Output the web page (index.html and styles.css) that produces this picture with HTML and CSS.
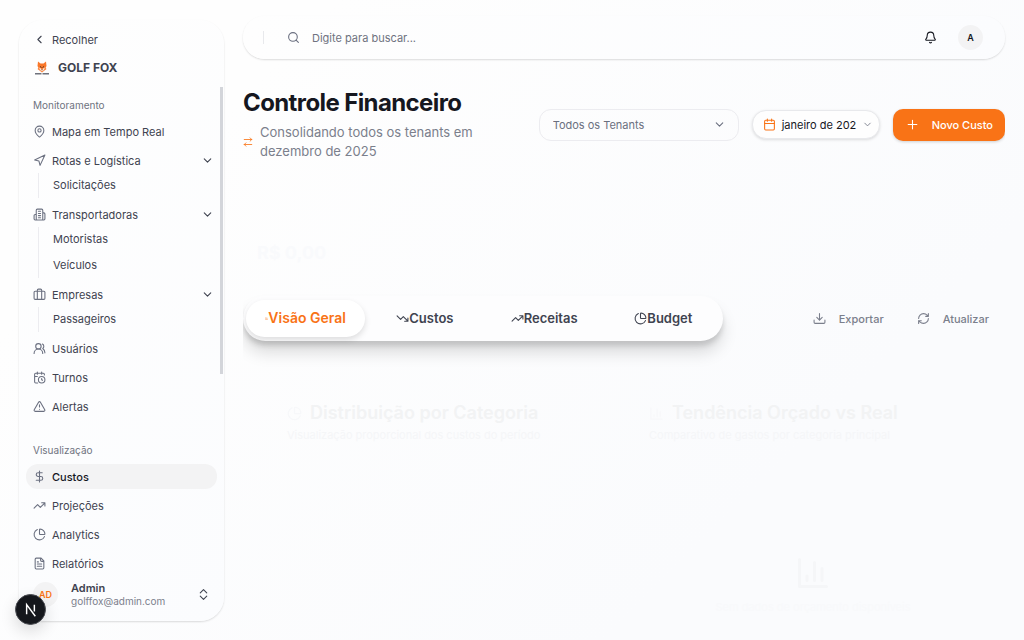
FILE: index.html
```html
<!DOCTYPE html>
<html lang="pt-BR">
<head>
<meta charset="utf-8">
<title>Controle Financeiro</title>
<link rel="stylesheet" href="styles.css">
</head>
<body>
<svg class="sprite" aria-hidden="true">
  <symbol id="left" viewBox="0 0 24 24"><path d="m15 18-6-6 6-6"/></symbol>
  <symbol id="down" viewBox="0 0 24 24"><path d="m6 9 6 6 6-6"/></symbol>
  <symbol id="pin" viewBox="0 0 24 24"><path d="M20 10c0 5-5.500 10.200-7.400 11.800a1 1 0 0 1-1.200 0C9.500 20.200 4 15 4 10a8 8 0 0 1 16 0"/><circle cx="12" cy="10" r="3"/></symbol>
  <symbol id="nav" viewBox="0 0 24 24"><path d="M3 11 22 2l-9 19-2-8z"/></symbol>
  <symbol id="building" viewBox="0 0 24 24"><path d="M6 22V4a2 2 0 0 1 2-2h8a2 2 0 0 1 2 2v18zM6 12H4a2 2 0 0 0-2 2v6a2 2 0 0 0 2 2h2M18 9h2a2 2 0 0 1 2 2v9a2 2 0 0 1-2 2h-2M10 6h4M10 10h4M10 14h4M10 18h4"/></symbol>
  <symbol id="case" viewBox="0 0 24 24"><path d="M8 20V4a2 2 0 0 1 2-2h4a2 2 0 0 1 2 2v16"/><rect x="2" y="6" width="20" height="15" rx="2"/></symbol>
  <symbol id="users" viewBox="0 0 24 24"><path d="M18 21a8 8 0 0 0-16 0"/><circle cx="10" cy="8" r="5"/><path d="M22 20c0-3.400-2-6.500-4-8a5 5 0 0 0-.5-8.300"/></symbol>
  <symbol id="calclock" viewBox="0 0 24 24"><path d="M16 14v2.200l1.600 1M16 2v4M21 7.500V6a2 2 0 0 0-2-2H5a2 2 0 0 0-2 2v14a2 2 0 0 0 2 2h3.500M3 10h5M8 2v4"/><circle cx="16" cy="16" r="6"/></symbol>
  <symbol id="alert" viewBox="0 0 24 24"><path d="m21.700 18-8-14a2 2 0 0 0-3.400 0l-8 14A2 2 0 0 0 4 21h16a2 2 0 0 0 1.700-3M12 9v4M12 17h.01"/></symbol>
  <symbol id="dollar" viewBox="0 0 24 24"><path d="M12 2v20M17 5H9.500a3.500 3.500 0 0 0 0 7h5a3.500 3.500 0 0 1 0 7H6"/></symbol>
  <symbol id="up" viewBox="0 0 24 24"><path d="M16 7h6v6M22 7l-8.500 8.500-5-5L2 17"/></symbol>
  <symbol id="fall" viewBox="0 0 24 24"><path d="M16 17h6v-6M22 17l-8.500-8.500-5 5L2 7"/></symbol>
  <symbol id="pie" viewBox="0 0 24 24"><path d="M21 12c.6 0 1-.4 1-1a9 9 0 0 0-9-9c-.6 0-1 .4-1 1v8a1 1 0 0 0 1 1zM21.200 15.900A10 10 0 1 1 8 2.800"/></symbol>
  <symbol id="file" viewBox="0 0 24 24"><path d="M15 2H6a2 2 0 0 0-2 2v16a2 2 0 0 0 2 2h12a2 2 0 0 0 2-2V7zM14 2v4a2 2 0 0 0 2 2h4M10 9H8M16 13H8M16 17H8"/></symbol>
  <symbol id="updown" viewBox="0 0 24 24"><path d="m6 15 6 6 6-6M6 9l6-6 6 6"/></symbol>
  <symbol id="search" viewBox="0 0 24 24"><circle cx="11" cy="11" r="8"/><path d="m21 21-4.300-4.300"/></symbol>
  <symbol id="bell" viewBox="0 0 24 24"><path d="M10.300 21a2 2 0 0 0 3.400 0M3.300 15.300A1 1 0 0 0 4 17h16a1 1 0 0 0 .7-1.700C19.400 14 18 12.500 18 8A6 6 0 0 0 6 8c0 4.500-1.400 6-2.700 7.300"/></symbol>
  <symbol id="swap" viewBox="0 0 24 24"><path d="m17 2 4 4-4 4M3 6h18M7 22l-4-4 4-4M21 18H3"/></symbol>
  <symbol id="cal" viewBox="0 0 24 24"><path d="M8 2v4M16 2v4M3 10h18"/><rect x="3" y="4" width="18" height="18" rx="2"/></symbol>
  <symbol id="plus" viewBox="0 0 24 24"><path d="M4 12h16M12 4v16"/></symbol>
  <symbol id="export" viewBox="0 0 24 24"><path d="M12 3v12M7 10l5 5 5-5M2 15v4a2 2 0 0 0 2 2h16a2 2 0 0 0 2-2v-4"/></symbol>
  <symbol id="refresh" viewBox="0 0 24 24"><path d="M3 12a9 9 0 0 1 9-9 9.800 9.800 0 0 1 6.700 2.700L21 8M21 3v5h-5M21 12a9 9 0 0 1-9 9 9.800 9.800 0 0 1-6.700-2.700L3 16M8 16H3v5"/></symbol>
  <symbol id="bars" viewBox="0 0 24 24"><path d="M3 3v18h18M18 17V9M13 17V5M8 17v-3"/></symbol>
</svg>
<div class="app">
  <aside class="sidebar">
    <button class="row collapse"><svg class="icon"><use href="#left"/></svg><span>Recolher</span></button>
    <div class="brand">
      <svg class="fox" viewBox="0 0 28 28" aria-hidden="true"><path class="fur" d="M6 1l5 4h6l5-4 1 9-2 4 2 2-4 3-5 4-5-4-4-3 2-2-2-4z"/><path class="muzzle" d="M8 13l4 2 2 4 2-4 4-2-2 5-4 3-4-3z"/><path class="ink" d="M12 17h4l-2 2zM0 24h13v3H0zM15 24h13v3H15z"/><path class="eye" d="M10 11l3 2M18 11l-3 2"/></svg>
      <strong>GOLF FOX</strong>
    </div>
    <nav class="menu">
      <h2>Monitoramento</h2>
      <a class="row" href="#"><svg class="icon"><use href="#pin"/></svg><span>Mapa em Tempo Real</span></a>
      <a class="row" href="#"><svg class="icon"><use href="#nav"/></svg><span>Rotas e Logística</span><svg class="icon chev"><use href="#down"/></svg></a>
      <div class="sub"><a href="#">Solicitações</a></div>
      <a class="row" href="#"><svg class="icon"><use href="#building"/></svg><span>Transportadoras</span><svg class="icon chev"><use href="#down"/></svg></a>
      <div class="sub"><a href="#">Motoristas</a><a href="#">Veículos</a></div>
      <a class="row" href="#"><svg class="icon"><use href="#case"/></svg><span>Empresas</span><svg class="icon chev"><use href="#down"/></svg></a>
      <div class="sub"><a href="#">Passageiros</a></div>
      <a class="row" href="#"><svg class="icon"><use href="#users"/></svg><span>Usuários</span></a>
      <a class="row" href="#"><svg class="icon"><use href="#calclock"/></svg><span>Turnos</span></a>
      <a class="row" href="#"><svg class="icon"><use href="#alert"/></svg><span>Alertas</span></a>
      <h2 class="second">Visualização</h2>
      <a class="row active" href="#"><svg class="icon"><use href="#dollar"/></svg><span>Custos</span></a>
      <a class="row" href="#"><svg class="icon"><use href="#up"/></svg><span>Projeções</span></a>
      <a class="row" href="#"><svg class="icon"><use href="#pie"/></svg><span>Analytics</span></a>
      <a class="row" href="#"><svg class="icon"><use href="#file"/></svg><span>Relatórios</span></a>
    </nav>
    <button class="account">
      <span class="avatar orange">AD</span>
      <span class="who"><strong>Admin</strong><small>golffox@admin.com</small></span>
      <svg class="icon"><use href="#updown"/></svg>
    </button>
    <div class="scrollbar"></div>
  </aside>
  <div class="content">
    <header class="topbar">
      <span class="divider"></span>
      <label class="search"><svg class="icon"><use href="#search"/></svg><input type="text" placeholder="Digite para buscar..." aria-label="Buscar"></label>
      <button class="plain" aria-label="Notificações"><svg class="icon"><use href="#bell"/></svg></button>
      <button class="avatar">A</button>
    </header>
    <main>
      <section class="heading">
        <div class="intro">
          <h1>Controle Financeiro</h1>
          <p><svg class="icon"><use href="#swap"/></svg><span>Consolidando todos os tenants em dezembro de 2025</span></p>
        </div>
        <div class="actions">
          <div class="tenant">
            <select aria-label="Tenant"><option>Todos os Tenants</option></select>
            <svg class="icon"><use href="#down"/></svg>
          </div>
          <button class="month"><svg class="icon cal"><use href="#cal"/></svg><span>janeiro de 202</span><svg class="icon"><use href="#down"/></svg></button>
          <button class="primary"><svg class="icon"><use href="#plus"/></svg>Novo Custo</button>
        </div>
      </section>
      <section class="summary"><span>R$ 0,00</span></section>
      <section class="toolbar">
        <div class="tabs" role="tablist">
          <button role="tab" aria-selected="true" class="tab selected"><svg class="icon"><use href="#bars"/></svg>Visão Geral</button>
          <button role="tab" class="tab"><svg class="icon"><use href="#fall"/></svg>Custos</button>
          <button role="tab" class="tab"><svg class="icon"><use href="#up"/></svg>Receitas</button>
          <button role="tab" class="tab"><svg class="icon"><use href="#pie"/></svg>Budget</button>
        </div>
        <div class="tools">
          <button class="plain"><svg class="icon"><use href="#export"/></svg>Exportar</button>
          <button class="plain"><svg class="icon"><use href="#refresh"/></svg>Atualizar</button>
        </div>
      </section>
      <section class="charts">
        <article>
          <h3><svg class="icon"><use href="#pie"/></svg>Distribuição por Categoria</h3>
          <p>Visualização proporcional dos custos do período</p>
        </article>
        <article>
          <h3><svg class="icon"><use href="#bars"/></svg>Tendência Orçado vs Real</h3>
          <p>Comparativo de gastos por categoria principal</p>
          <div class="empty"><svg class="icon"><use href="#bars"/></svg><span>Sem dados de orçamento disponíveis</span></div>
        </article>
      </section>
    </main>
  </div>
</div>
<button class="dev" aria-label="Ferramentas"><svg viewBox="0 0 30 30" aria-hidden="true"><path d="M11 20V10L20 22M19 10v7"/></svg></button>
</body>
</html>
```
FILE: styles.css
```css
* { box-sizing: border-box; }
body {
  margin: 0;
  min-height: 100vh;
  overflow: hidden;
  font: 11px/16px Inter, sans-serif;
  color: #3f4350;
  background: linear-gradient(135deg, #fefefe 20%, #fafbfd 75%);
}
button, input, select { font: inherit; color: inherit; border: 0; background: none; padding: 0; margin: 0; }
a { color: inherit; text-decoration: none; }
h1, h2, h3, p { margin: 0; }
.sprite { display: none; }
.icon {
  width: 13px; height: 13px; flex: none;
  fill: none; stroke: currentColor; stroke-width: 2;
  stroke-linecap: round; stroke-linejoin: round;
}
.app { display: flex; height: 100vh; }

.sidebar {
  position: relative;
  flex: none;
  display: flex; flex-direction: column;
  width: 205px;
  margin: 20px 0 19px 19px;
  padding: 7px;
  border-radius: 24px;
  background: linear-gradient(135deg, #fefefe, #fbfcfe);
  box-shadow: 0 1px 2px rgba(0, 0, 0, .14);
}
.row { flex: none; display: flex; align-items: center; gap: 6px; height: 25px; padding: 0 7px; border-radius: 12px; }
.row > .icon:first-child { color: #6b7080; }
.row span { flex: 1; text-align: left; }
.collapse > .icon:first-child { color: #3f4350; }
.row .chev { color: #3f4350; margin-right: -4px; }
.brand { display: flex; align-items: center; gap: 9px; height: 32px; padding: 0 9px; font-size: 12px; }
.brand strong { font-weight: 700; }
.fox { width: 14px; height: 14px; }
.fur { fill: #f9772a; }
.muzzle { fill: #fbe3d2; }
.ink { fill: #3f4350; opacity: .75; }
.eye { fill: none; stroke: #5b3420; stroke-width: 2; }
.menu { flex: 1; min-height: 0; display: flex; flex-direction: column; gap: 4px; padding-top: 11px; }
.menu h2 { font-size: 10px; line-height: 20px; font-weight: 400; color: #6f7380; padding: 0 7px; }
.menu .second { margin-top: 17px; }
.active { background: #f3f3f4; color: #15171f; font-weight: 500; }
.sub { display: flex; flex-direction: column; gap: 1px; margin: -4px 0 0 12px; padding-left: 14px; border-left: 1px solid #ececf0; }
.sub a { line-height: 25px; }
.scrollbar { position: absolute; right: 1px; top: 67px; width: 3px; height: 287px; background: #d3d5da; }
.account { flex: none; display: flex; align-items: center; gap: 13px; height: 39px; padding: 0 7px; text-align: left; }
.who { flex: 1; }
.who strong, .who small { display: block; line-height: 13px; }
.who strong { font-weight: 600; }
.who small { font-size: 10px; color: #7b7f8c; }
.avatar { display: grid; place-items: center; width: 25px; height: 25px; border-radius: 50%; background: #f3f3f4; color: #15171f; font-size: 9px; font-weight: 600; }
.avatar.orange { color: #f97316; }

.content { flex: 1; min-width: 0; display: flex; flex-direction: column; padding: 16px 19px 0; }
.topbar {
  display: flex; align-items: center;
  height: 43px; padding: 0 22px 0 20px;
  border-radius: 22px;
  background: linear-gradient(90deg, #fefefe, #fbfcfe);
  box-shadow: 0 1px 2px rgba(0, 0, 0, .14);
}
.divider { width: 1px; height: 13px; background: #e8e9ec; }
.search { flex: 1; display: flex; align-items: center; gap: 12px; padding-left: 23px; color: #6b7080; }
.search input { flex: 1; outline: 0; }
.search input::placeholder { color: #6f7380; opacity: 1; }
.plain { display: flex; align-items: center; gap: 13px; }
.topbar .plain { color: #15171f; margin-right: 21px; }

main { flex: 1; min-height: 0; overflow: hidden; padding-top: 29px; }
.heading { display: flex; justify-content: space-between; align-items: center; }
.intro { width: 256px; }
h1 { font-size: 24px; line-height: 30px; font-weight: 700; letter-spacing: -0.025em; color: #15171f; }
.intro p { display: flex; align-items: center; gap: 7px; margin-top: 5px; font-size: 13px; line-height: 19px; color: #7b7f8c; }
.intro p .icon { width: 10px; height: 10px; color: #f97316; }
.actions { display: flex; align-items: center; gap: 13px; }
.tenant { display: flex; align-items: center; width: 200px; height: 32px; padding: 0 12px 0 13px; border: 1px solid #ececf0; border-radius: 12px; color: #6b7080; }
.tenant select { flex: 1; appearance: none; outline: 0; }
.month { display: flex; align-items: center; gap: 6px; width: 128px; height: 29px; padding: 0 10px; border: 1px solid #e8e9ec; border-radius: 14px; background: #fefefe; color: #15171f; box-shadow: 0 1px 3px rgba(0, 0, 0, .13); }
.month span { flex: 1; white-space: nowrap; text-align: left; }
.month .cal { color: #f97316; }
.month .icon:last-child { width: 11px; height: 11px; color: #7b7f8c; }
.primary { display: flex; align-items: center; gap: 13px; height: 32px; padding: 0 12px 0 13px; border-radius: 10px; background: #f97316; color: #fff; font-weight: 500; box-shadow: 0 1px 3px rgba(0, 0, 0, .18); }
.summary { height: 135px; padding: 80px 14px 0; font-size: 18px; line-height: 24px; font-weight: 700; color: #f9fafc; }

.toolbar { display: flex; align-items: center; justify-content: space-between; }
.tabs { display: grid; grid-template-columns: repeat(4, 1fr); flex: 0 1 480px; height: 45px; padding: 4px 0 4px 3px; border-radius: 23px; background: #fdfdfe; box-shadow: 0 12px 16px rgba(0, 0, 0, .13), 0 5px 5px rgba(0, 0, 0, .12); }
.tab { display: flex; align-items: center; justify-content: center; border-radius: 19px; font-size: 13px; line-height: 16px; font-weight: 600; padding-bottom: 1px; }
.selected { font-size: 14px; color: #f97316; background: #fff; box-shadow: 0 3px 6px rgba(0, 0, 0, .13); }
.selected .icon { width: 3px; height: 3px; }
.tools { display: flex; gap: 33px; padding-right: 16px; color: #7b7f8c; font-weight: 500; }
.charts { display: grid; grid-template-columns: 1fr 1fr; gap: 34px; padding: 60px 28px 0 44px; }
.charts h3 { display: flex; align-items: center; gap: 8px; font-size: 18px; line-height: 24px; font-weight: 600; color: #f2f3f4; white-space: nowrap; }
.charts h3 .icon { width: 15px; height: 15px; color: #f7f8fa; }
.charts p { font-size: 11px; line-height: 20px; color: #f5f6f8; white-space: nowrap; }
.empty { display: grid; justify-items: center; gap: 8px; padding-top: 110px; color: #f5f6f8; }
.empty .icon { width: 36px; height: 36px; }
.empty span { color: #f8f9fb; }

.dev { position: absolute; left: 15px; bottom: 15px; width: 31px; height: 31px; border: 1px solid #4a4c52; border-radius: 50%; background: #15171c; box-shadow: 0 6px 16px rgba(0, 0, 0, .14); }
.dev svg { display: block; width: 29px; height: 29px; fill: none; stroke: #fff; stroke-width: 1.5; }
```
